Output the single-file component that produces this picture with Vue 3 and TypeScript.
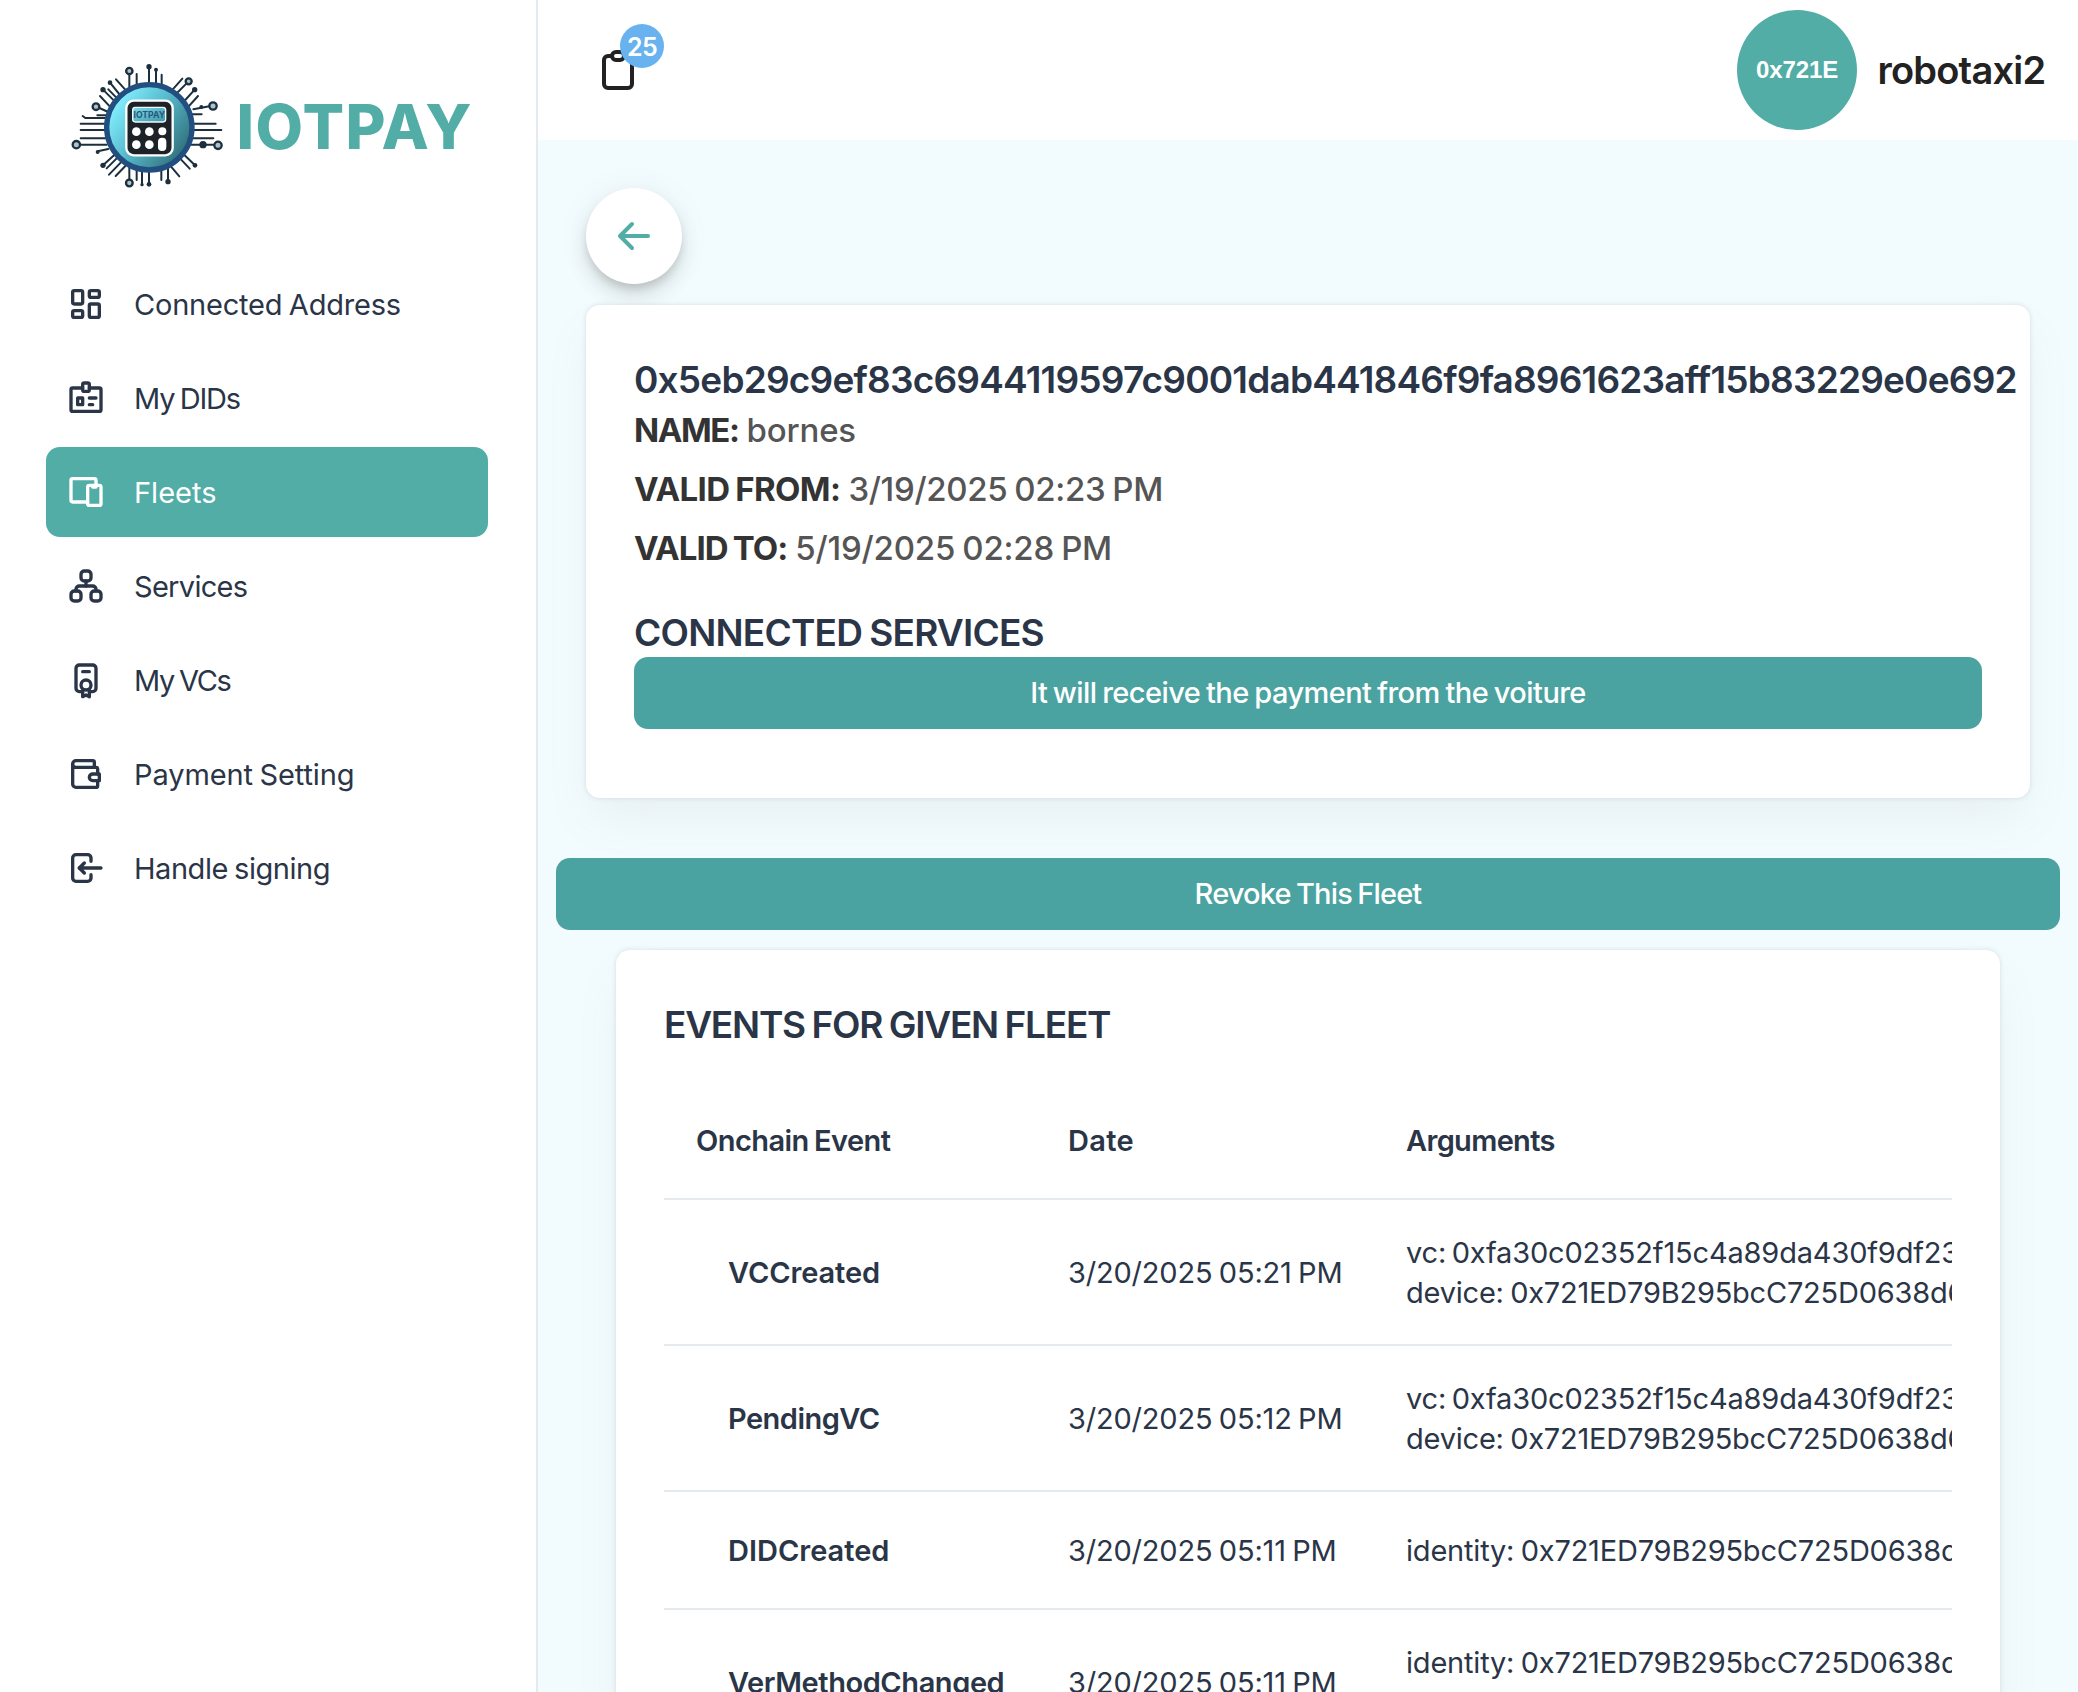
<script setup lang="ts">
interface NavItem { label: string; cls: string; active?: boolean; paths: string[] }
interface ChainEvent { name: string; cls: string; date: string; args: { text: string; cls: string }[] }

const navItems: NavItem[] = [
  { label: 'Connected Address', cls: 'n-address', paths: ['M5 4h4a1 1 0 0 1 1 1v6a1 1 0 0 1 -1 1h-4a1 1 0 0 1 -1 -1v-6a1 1 0 0 1 1 -1', 'M5 16h4a1 1 0 0 1 1 1v2a1 1 0 0 1 -1 1h-4a1 1 0 0 1 -1 -1v-2a1 1 0 0 1 1 -1', 'M15 12h4a1 1 0 0 1 1 1v6a1 1 0 0 1 -1 1h-4a1 1 0 0 1 -1 -1v-6a1 1 0 0 1 1 -1', 'M15 4h4a1 1 0 0 1 1 1v2a1 1 0 0 1 -1 1h-4a1 1 0 0 1 -1 -1v-2a1 1 0 0 1 1 -1'] },
  { label: 'My DIDs', cls: 'n-dids', paths: ['M7 12h3v4h-3z', 'M10 6h-6a1 1 0 0 0 -1 1v12a1 1 0 0 0 1 1h16a1 1 0 0 0 1 -1v-12a1 1 0 0 0 -1 -1h-6', 'M10 4a1 1 0 0 1 1 -1h2a1 1 0 0 1 1 1v3a1 1 0 0 1 -1 1h-2a1 1 0 0 1 -1 -1z', 'M14 16h2', 'M14 12h4'] },
  { label: 'Fleets', cls: 'n-fleets', active: true, paths: ['M13 9a1 1 0 0 1 1 -1h6a1 1 0 0 1 1 1v10a1 1 0 0 1 -1 1h-6a1 1 0 0 1 -1 -1v-10z', 'M18 8v-3a1 1 0 0 0 -1 -1h-13a1 1 0 0 0 -1 1v12a1 1 0 0 0 1 1h9', 'M16 9h2'] },
  { label: 'Services', cls: 'n-services', paths: ['M3 17a2 2 0 0 1 2 -2h2a2 2 0 0 1 2 2v2a2 2 0 0 1 -2 2h-2a2 2 0 0 1 -2 -2z', 'M15 17a2 2 0 0 1 2 -2h2a2 2 0 0 1 2 2v2a2 2 0 0 1 -2 2h-2a2 2 0 0 1 -2 -2z', 'M9 5a2 2 0 0 1 2 -2h2a2 2 0 0 1 2 2v2a2 2 0 0 1 -2 2h-2a2 2 0 0 1 -2 -2z', 'M6 15v-1a2 2 0 0 1 2 -2h8a2 2 0 0 1 2 2v1', 'M12 9v3'] },
  { label: 'My VCs', cls: 'n-vcs', paths: ['M9 15a3 3 0 1 0 6 0a3 3 0 1 0 -6 0', 'M10 7h4', 'M10 18v4l2 -1l2 1v-4', 'M10 19h-2a2 2 0 0 1 -2 -2v-12a2 2 0 0 1 2 -2h8a2 2 0 0 1 2 2v12a2 2 0 0 1 -2 2h-2'] },
  { label: 'Payment Setting', cls: 'n-payment', paths: ['M17 8v-3a1 1 0 0 0 -1 -1h-10a2 2 0 0 0 0 4h12a1 1 0 0 1 1 1v3m0 4v3a1 1 0 0 1 -1 1h-12a2 2 0 0 1 -2 -2v-12', 'M20 12v4h-4a2 2 0 0 1 0 -4h4'] },
  { label: 'Handle signing', cls: 'n-signing', paths: ['M15 8v-2a2 2 0 0 0 -2 -2h-7a2 2 0 0 0 -2 2v12a2 2 0 0 0 2 2h7a2 2 0 0 0 2 -2v-2', 'M21 12h-13l3 -3', 'M11 15l-3 -3'] },
]

const vc = { text: 'vc: 0xfa30c02352f15c4a89da430f9df23', cls: 'a-vc' }
const device = { text: 'device: 0x721ED79B295bcC725D0638d6', cls: 'a-device' }
const identity = { text: 'identity: 0x721ED79B295bcC725D0638d6', cls: 'a-identity' }

const events: ChainEvent[] = [
  { name: 'VCCreated', cls: 'e-vc', date: '3/20/2025 05:21 PM', args: [vc, device] },
  { name: 'PendingVC', cls: 'e-pending', date: '3/20/2025 05:12 PM', args: [vc, device] },
  { name: 'DIDCreated', cls: 'e-did', date: '3/20/2025 05:11 PM', args: [identity] },
  { name: 'VerMethodChanged', cls: 'e-method', date: '3/20/2025 05:11 PM', args: [identity, { text: '\u00a0', cls: '' }] },
]
</script>

<template>
  <div class="app">
    <aside class="sidebar">
      <div class="brand">
        <svg class="brand-mark" viewBox="90 60 465 390">
          <defs>
            <linearGradient id="disc" x1="0" y1="0.1" x2="1" y2="0.8"><stop offset="0.15" stop-color="#7eeafa" /><stop offset="0.5" stop-color="#56b9cb" /><stop offset="1" stop-color="#2d6670" /></linearGradient>
            <linearGradient id="lcd" x1="0" y1="0" x2="1" y2="1"><stop offset="0" stop-color="#7fdcec" /><stop offset="1" stop-color="#3f93a8" /></linearGradient>
          </defs>
          <g stroke="#1d2f3d" stroke-width="6" fill="none" stroke-linecap="round">
            <path d="M268 105V140M290 102V140M327 85V140M348 90V140M365 104V140M228 118L255 148M210 128L240 165M189 149L225 185M205 148L232 176M180 168L212 202M178 204L205 216M172 226H200M128 228L136 234H200M122 251H200M122 270H200M122 295H200M120 314H200M173 334L205 327M189 376L222 346M200 385L230 355M207 404L242 368M227 408L256 378M268 418V370M290 420V370M306 434V370M327 432V370M364 420V370M384 424V370M418 409L385 370M449 386L415 350M465 376L430 342M520 295H450M520 314H450M544 270H450M527 251H450M485 223H450M508 199L460 208M474 168L440 206M464 149L425 192M445 125L405 165M427 116L395 152" />
            <g fill="#a9c4cc" stroke-width="7"><circle cx="268" cy="93" r="9.500" /><circle cx="446" cy="124" r="9" /><circle cx="168" cy="200" r="10" /><circle cx="519" cy="198" r="11" /><circle cx="109" cy="314" r="11" /><circle cx="534" cy="316" r="11" /><circle cx="268" cy="429" r="10" /></g>
          </g>
          <g fill="#1d2f3d"><circle cx="327" cy="80" r="8" /><circle cx="348" cy="89" r="6" /><circle cx="210" cy="128" r="7" /><circle cx="189" cy="149" r="8" /><circle cx="464" cy="149" r="8" /><circle cx="484" cy="201" r="6" /><circle cx="489" cy="314" r="11" /><circle cx="173" cy="336" r="6" /><circle cx="189" cy="376" r="8" /><circle cx="465" cy="376" r="7" /><circle cx="327" cy="433" r="7" /><circle cx="306" cy="434" r="5" /><circle cx="384" cy="425" r="8" /></g>
          <circle cx="328" cy="262" r="128" fill="url(#disc)" stroke="#224f80" stroke-width="16" />
          <rect x="259" y="182" width="139" height="164" rx="22" fill="#1d2228" stroke="#fff" stroke-width="7" />
          <rect x="278" y="202" width="99" height="44" rx="8" fill="url(#lcd)" stroke="#f2fafb" stroke-width="4" />
          <text x="328" y="235" class="lcd-text" text-anchor="middle">IOTPAY</text>
          <g fill="#fff"><circle cx="289" cy="275" r="13" /><circle cx="328" cy="275" r="13" /><circle cx="367" cy="274" r="12" /><circle cx="289" cy="314" r="13" /><circle cx="328" cy="314" r="13" /><rect x="354" y="293" width="25" height="40" rx="12" /></g>
        </svg>
        <span class="brand-name">IOTPAY</span>
      </div>
      <nav class="nav">
        <a v-for="item in navItems" :key="item.label" class="nav-item" :class="{ active: item.active }">
          <svg class="nav-icon" viewBox="0 0 24 24"><path v-for="d in item.paths" :key="d" :d="d" /></svg>
          <span :class="item.cls">{{ item.label }}</span>
        </a>
      </nav>
    </aside>

    <div class="page">
      <header class="topbar">
        <div class="tasks">
          <svg class="tasks-icon" viewBox="0 0 24 24"><path d="M9 5h-2a2 2 0 0 0 -2 2v12a2 2 0 0 0 2 2h10a2 2 0 0 0 2 -2v-12a2 2 0 0 0 -2 -2h-2" /><path d="M9 5a2 2 0 0 1 2 -2h2a2 2 0 0 1 2 2a2 2 0 0 1 -2 2h-2a2 2 0 0 1 -2 -2z" /></svg>
          <span class="badge">25</span>
        </div>
        <div class="user">
          <span class="avatar">0x721E</span>
          <span class="user-name">robotaxi2</span>
        </div>
      </header>

      <main class="content">
        <button class="back" aria-label="Back"><svg viewBox="0 0 24 24"><path d="M5 12h14M5 12l6 6M5 12l6 -6" /></svg></button>
        <section class="card fleet">
          <h1 class="heading hash">0x5eb29c9ef83c6944119597c9001dab441846f9fa8961623aff15b83229e0e692</h1>
          <p class="field"><b class="k-name">NAME:</b><span class="v-name">bornes</span></p>
          <p class="field"><b class="k-from">VALID FROM:</b><span class="v-from">3/19/2025 02:23 PM</span></p>
          <p class="field"><b class="k-to">VALID TO:</b><span class="v-to">5/19/2025 02:28 PM</span></p>
          <h2 class="heading services">CONNECTED SERVICES</h2>
          <button class="btn b-service">It will receive the payment from the voiture</button>
        </section>
        <button class="btn revoke">Revoke This Fleet</button>
        <section class="card events">
          <h2 class="heading events-title">EVENTS FOR GIVEN FLEET</h2>
          <div class="table">
            <div class="row head">
              <span class="c-event h-event">Onchain Event</span>
              <span class="c-date h-date">Date</span>
              <span class="c-args h-args">Arguments</span>
            </div>
            <div v-for="e in events" :key="e.name" class="row" :class="{ tall: e.args.length > 1 }">
              <span class="c-event name" :class="e.cls">{{ e.name }}</span>
              <span class="c-date date">{{ e.date }}</span>
              <span class="c-args list"><span v-for="a in e.args" :key="a.text" class="arg" :class="a.cls">{{ a.text }}</span></span>
            </div>
          </div>
        </section>
      </main>
    </div>
  </div>
</template>

<style>
body { margin: 0; overflow: hidden; }
</style>

<style scoped>
* { box-sizing: border-box; }
.app { display: flex; height: 1692px; overflow: hidden; background: #fff; color: #2a3547; font-family: Inter, "Open Sans", sans-serif; font-size: 29px; word-spacing: -1.5px; }
.sidebar { width: 538px; flex: none; border-right: 2px solid #e5eaef; }
.brand { display: flex; align-items: center; height: 130px; margin: 60px 0 0 70px; }
.brand-mark { width: 155px; height: 130px; flex: none; }
.brand-name { margin: 3px 0 0 11.5px; font-size: 61.5px; font-weight: 800; letter-spacing: 1.4px; color: #51ada6; }
.lcd-text { font: 700 26px Inter, sans-serif; fill: #235a78; }

.nav { display: flex; flex-direction: column; gap: 4px; padding: 69px 48px 0 46px; }
.nav-item { display: flex; align-items: center; height: 90px; padding-left: 20px; border-radius: 14px; white-space: nowrap; }
.nav-item.active { background: #51ada6; color: #fff; }
.nav-icon { width: 40px; height: 40px; margin-right: 28px; flex: none; }
.nav-icon path, .tasks-icon path, .back path { fill: none; stroke: currentColor; stroke-width: 2; stroke-linecap: round; stroke-linejoin: round; }
.n-address { letter-spacing: -.2px; }
.n-dids { letter-spacing: -1.2px; }
.n-fleets { letter-spacing: 0; }
.n-services { letter-spacing: -.7px; }
.n-vcs { letter-spacing: -1.4px; }
.n-payment { letter-spacing: -.1px; }
.n-signing { letter-spacing: -.46px; }

.page { flex: 1; min-width: 0; background: #f2fbfd; }
.topbar { display: flex; align-items: center; justify-content: space-between; height: 140px; padding-left: 56px; background: #fff; color: #222; }
.tasks { position: relative; display: flex; width: 48px; height: 48px; }
.tasks-icon { width: 48px; height: 48px; }
.badge { position: absolute; left: 26px; top: -22px; width: 44px; height: 44px; border-radius: 50%; background: #68b2ef; color: #fff; font-size: 25px; font-weight: 600; line-height: 46px; letter-spacing: -.6px; text-align: center; }
.user { display: flex; align-items: center; width: 341px; }
.avatar { width: 120px; height: 120px; border-radius: 50%; background: #51ada6; color: #fff; font: bold 24px/120px "Liberation Sans", sans-serif; letter-spacing: -.1px; text-align: center; }
.user-name { margin-left: 20.5px; font-size: 38px; font-weight: 600; letter-spacing: -.78px; }

.content { display: flex; flex-direction: column; padding: 48px 18px 0; }
.back { display: flex; align-items: center; justify-content: center; width: 96px; height: 96px; margin-left: 30px; border: 0; padding: 0; border-radius: 50%; background: #fff; color: #51ada6; box-shadow: 0 6px 10px -2px rgba(0,0,0,.14), 0 12px 20px rgba(0,0,0,.1), 0 2px 36px rgba(0,0,0,.05); }
.back svg { width: 48px; height: 48px; }
.card { background: #fff; border-radius: 14px; padding: 48px; box-shadow: rgba(145,158,171,.3) 0 0 4px, rgba(145,158,171,.12) 0 24px 48px -8px; white-space: nowrap; }
.fleet { height: 493px; margin: 21px 30px 0; }
.heading { margin: 0; font-size: 37px; line-height: 53px; font-weight: 600; }
.hash { letter-spacing: -.8px; }
.field { margin: 0 0 11px; height: 48px; line-height: 48px; font-size: 33px; color: #555; }
.field b { color: #333; margin-right: 8px; }
.field span { font-weight: 500; }
.k-name { letter-spacing: -1.4px; }
.v-name { letter-spacing: -.2px; }
.k-from { letter-spacing: -.6px; }
.v-from { letter-spacing: -.33px; }
.k-to { letter-spacing: -.98px; }
.v-to { letter-spacing: -.2px; }
.services { margin-top: 36px; line-height: 49px; letter-spacing: -.77px; }
.btn { display: block; width: 100%; height: 72px; border: 0; padding: 0; border-radius: 14px; background: #4aa3a0; color: #fff; font: 500 29px/72px Inter, sans-serif; word-spacing: -1.5px; text-align: center; }
.b-service { letter-spacing: -.56px; }
.revoke { margin-top: 60px; letter-spacing: -.85px; }

.events { height: 900px; margin: 20px 60px 0; }
.events-title { letter-spacing: -1.23px; }
.table { margin-top: 31px; overflow: hidden; }
.row { display: flex; align-items: center; height: 118px; border-bottom: 2px solid #e5eaef; }
.row.tall { height: 146px; }
.head { font-weight: 600; }
.c-event { width: 372px; padding-left: 32px; flex: none; }
.name { padding-left: 64px; font-weight: 600; }
.c-date { width: 338px; padding-left: 32px; flex: none; }
.date { letter-spacing: -.19px; }
.c-args { padding-left: 32px; flex: none; }
.h-event { letter-spacing: -.55px; }
.h-date { letter-spacing: .3px; }
.h-args { letter-spacing: -.67px; }
.e-vc { letter-spacing: -.1px; }
.e-pending { letter-spacing: -.52px; }
.e-did { letter-spacing: 0; }
.e-method { letter-spacing: -.43px; }
.list { margin-top: 2px; }
.arg { display: block; line-height: 40px; }
.a-vc { letter-spacing: -.17px; word-spacing: -2.5px; }
.a-device { letter-spacing: -.22px; }
.a-identity { letter-spacing: -.2px; }
</style>
